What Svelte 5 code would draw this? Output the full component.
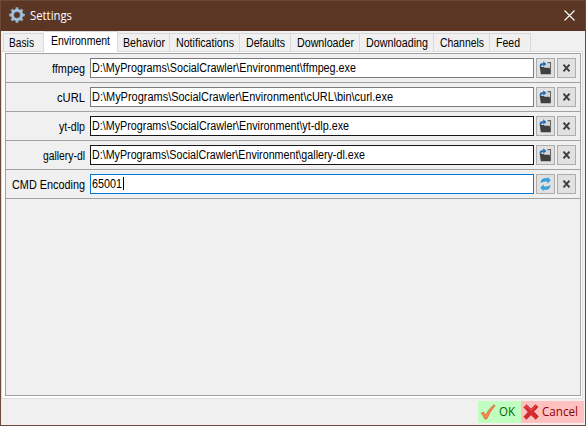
<script>
  const tabs = [
    { name: 'Basis', width: 41, text: 25 },
    { name: 'Environment', width: 74, text: 59 },
    { name: 'Behavior', width: 52, text: 42 },
    { name: 'Notifications', width: 70, text: 58 },
    { name: 'Defaults', width: 51, text: 39 },
    { name: 'Downloader', width: 69, text: 57 },
    { name: 'Downloading', width: 74, text: 62 },
    { name: 'Channels', width: 56, text: 44 },
    { name: 'Feed', width: 41, text: 24 }
  ];
  const root = 'D:\\MyPrograms\\SocialCrawler\\Environment\\';
  const rows = [
    { label: 'ffmpeg', labelText: 33, value: root + 'ffmpeg.exe', valueText: 264, tone: 'gray', icon: 'open' },
    { label: 'cURL', labelText: 28, value: root + 'cURL\\bin\\curl.exe', valueText: 301, tone: 'gray', icon: 'open' },
    { label: 'yt-dlp', labelText: 26, value: root + 'yt-dlp.exe', valueText: 257, tone: 'dark', icon: 'open' },
    { label: 'gallery-dl', labelText: 42, value: root + 'gallery-dl.exe', valueText: 273, tone: 'dark', icon: 'open' },
    { label: 'CMD Encoding', labelText: 73, value: '65001', valueText: 30, tone: 'focus', icon: 'refresh' }
  ];
  const teeth = [0, 45, 90, 135, 180, 225, 270, 315];
  let active = $state('Environment');

  // Condenses a text horizontally so that it takes up its box's width.
  function fit(node, width) {
    const text = node.firstElementChild;
    node.style.width = `${width}px`;
    text.style.transform = `scaleX(${width / text.getBoundingClientRect().width})`;
  }
</script>

<div class="window">
  <header>
    <svg class="gear" width="16" height="16" viewBox="0 0 16 16">
      {#each teeth as a}
        <rect x="6.6" y="0.2" width="2.8" height="4" rx=".6" fill="#8fb0cf" transform="rotate({a} 8 8)" />
      {/each}
      <circle cx="8" cy="8" r="4.6" fill="none" stroke="#a9c5de" stroke-width="2.8" />
      <circle cx="8" cy="8" r="3.3" fill="none" stroke="#7594b3" stroke-width=".6" />
    </svg>
    <div class="title"><span class="fit" use:fit={42}><span>Settings</span></span></div>
    <svg class="close" width="11" height="11" viewBox="0 0 11 11">
      <path d="M.5 .5 10.5 10.5M10.5 .5 .5 10.5" stroke="#fff" stroke-width="1.1" />
    </svg>
  </header>

  <nav>
    {#each tabs as tab}
      <button class="tab" class:active={tab.name === active} style="width:{tab.width}px" onclick={() => (active = tab.name)}>
        <span class="fit" use:fit={tab.text}><span>{tab.name}</span></span>
      </button>
    {/each}
  </nav>

  <main>
    <div class="table">
      {#each rows as row}
        <div class="row">
          <div class="label"><span class="fit" use:fit={row.labelText}><span>{row.label}</span></span></div>
          <div class="field {row.tone}">
            <span class="fit" use:fit={row.valueText}><span>{row.value}</span></span>{#if row.tone === 'focus'}<i class="caret"></i>{/if}
          </div>
          <button class="tool" aria-label={row.icon}>
            {#if row.icon === 'open'}
              <svg width="13" height="14" viewBox="0 0 13 14">
                <path d="M6 2.8H10.5v4H5.5z" fill="#d4d4d4" />
                <path d="M8.5 1.6h3V11.5" fill="none" stroke="#666" stroke-width="1.1" />
                <path d="M.8 6h3.6L6 6.8h4.6l1.4 6.4H1.8z" fill="#404040" />
                <path d="M1.6 6V4.6Q1.8 3 4.6 3" fill="none" stroke="#1d6db5" stroke-width="1.8" />
                <path d="M4.2 .2 7.4 3 4.2 5.8z" fill="#1d6db5" />
              </svg>
            {:else}
              <svg width="13" height="16" viewBox="0 0 13 16">
                <path d="M1.5 7.3Q1.6 2.4 6.2 2L8.4 2.4 8.4 .8 11.8 4.2 8.2 7.8V5.6Q4.4 4.8 1.5 7.3z" fill="#36a3dc" />
                <path d="M11.5 8.7Q11.4 13.6 6.8 14L4.6 13.6 4.6 15.2 1.2 11.8 4.8 8.2V10.4Q8.6 11.2 11.5 8.7z" fill="#36a3dc" />
              </svg>
            {/if}
          </button>
          <button class="tool" aria-label="clear">
            <svg width="9" height="10" viewBox="0 0 9 10">
              <path d="M1.5 1.6 7.5 8.4M7.5 1.6 1.5 8.4" stroke="#3f3f3f" stroke-width="2" />
            </svg>
          </button>
        </div>
      {/each}
    </div>
  </main>

  <footer>
    <button class="ok">
      <svg width="16" height="16" viewBox="0 0 16 16">
        <path d="M1 9.2 3.6 8 5.7 11Q9 4.5 13.8 .8L15.2 1.7Q10 7 6.8 15H4.7Q3.5 11.5 1 9.2z" fill="#f58a4b" stroke="#c9683a" stroke-width=".7" />
      </svg>
      <span class="fit" use:fit={16}><span>OK</span></span>
    </button>
    <button class="cancel">
      <svg width="16" height="16" viewBox="0 0 16 16">
        <path d="M.8 3.2 3.7.8 8 5 12.5.8 15 3 10.7 7.5 15.3 12.6 12.7 15.2 8 10.7 3.4 15.2.9 12.8 5.3 8z" fill="#d62a2c" stroke="#b01c22" stroke-width=".7" />
        <path d="M2 3.2 3.7 2 7.9 6.3 12.5 2" fill="none" stroke="#f07070" stroke-width=".8" />
      </svg>
      <span class="fit" use:fit={36}><span>Cancel</span></span>
    </button>
  </footer>
</div>

<style>
  .window {
    box-sizing: border-box;
    width: 586px;
    height: 426px;
    display: flex;
    flex-direction: column;
    background: #f0f0f0;
    border: 1px solid #6b4a39;
    color: #000;
    font: 12.5px/14px "Liberation Sans", Arial, sans-serif;
    white-space: pre;
    overflow: hidden;
  }
  button {
    box-sizing: border-box;
    margin: 0;
    padding: 0;
    border: 0;
    font: inherit;
    color: inherit;
    white-space: pre;
    border-radius: 0;
  }
  svg { display: block; flex: none; }
  .fit { display: inline-flex; flex: none; vertical-align: top; }
  .fit > span { flex: none; transform-origin: 0 50%; }
  header {
    display: flex;
    align-items: center;
    flex: none;
    height: 30px;
    padding: 0 10px 0 8px;
    background: #5b3625;
    color: #fff;
    font: 12px/16px "Open Sans", "Noto Sans", sans-serif;
  }
  .gear { margin-bottom: 2px; }
  .title { margin-left: 5px; flex: 1; }
  .close { margin-bottom: 1px; }
  nav {
    display: flex;
    align-items: flex-end;
    flex: none;
    height: 20px;
    padding-left: 2px;
  }
  .tab {
    display: flex;
    justify-content: center;
    flex: none;
    height: 18px;
    background: #f0f0f0;
    border: solid #d9d9d9;
    border-width: 1px 1px 0 0;
    line-height: 19px;
  }
  .tab:first-child { border-left-width: 1px; padding-right: 5px; }
  .tab:last-child { padding-right: 4px; }
  .tab.active {
    height: 21px;
    margin-bottom: -1px;
    padding-right: 1px;
    background: #fff;
    border-color: #d9d9d9;
    line-height: 19px;
    position: relative;
  }
  main {
    box-sizing: border-box;
    flex: none;
    width: 582px;
    height: 348px;
    padding: 1px 1px 2px 3px;
    background: #fff;
    border: 1px solid #dcdcdc;
  }
  .table {
    box-sizing: border-box;
    width: 576px;
    height: 343px;
    background: #f0f0f0;
    border: 1px solid #a0a0a0;
  }
  .row {
    box-sizing: border-box;
    display: flex;
    height: 29px;
    padding: 4px 4px 4px 0;
    border-bottom: 1px solid #a0a0a0;
  }
  .label {
    flex: none;
    width: 79px;
    margin-right: 5px;
    text-align: right;
    line-height: 23px;
  }
  .field {
    box-sizing: border-box;
    display: flex;
    flex: none;
    width: 444px;
    height: 20px;
    padding-left: 1px;
    margin-right: 2px;
    background: #fff;
    border: 1px solid #7a7a7a;
    line-height: 18px;
  }
  .field.dark { border-color: #171717; }
  .field.focus { border-color: #0078d7; }
  .caret { width: 1px; height: 13px; margin: 2px 0 0 1px; background: #000; }
  .tool {
    display: flex;
    align-items: center;
    justify-content: center;
    flex: none;
    width: 19px;
    height: 20px;
    margin-right: 2px;
    background: #e1e1e1;
    border: 1px solid #adadad;
  }
  .tool:last-child { margin-right: 0; }
  footer {
    display: flex;
    justify-content: flex-end;
    flex: none;
    padding: 2px 1px 0 0;
    font: 12px/22px "Open Sans", "Noto Sans", sans-serif;
  }
  footer button { display: flex; align-items: center; height: 22px; }
  .ok { width: 43px; padding-left: 2px; background: #c0ffc0; color: #006400; }
  .cancel { width: 63px; padding-left: 2px; background: #ffc0c0; color: #8b0000; }
  footer .fit { margin-left: 3px; }
</style>
